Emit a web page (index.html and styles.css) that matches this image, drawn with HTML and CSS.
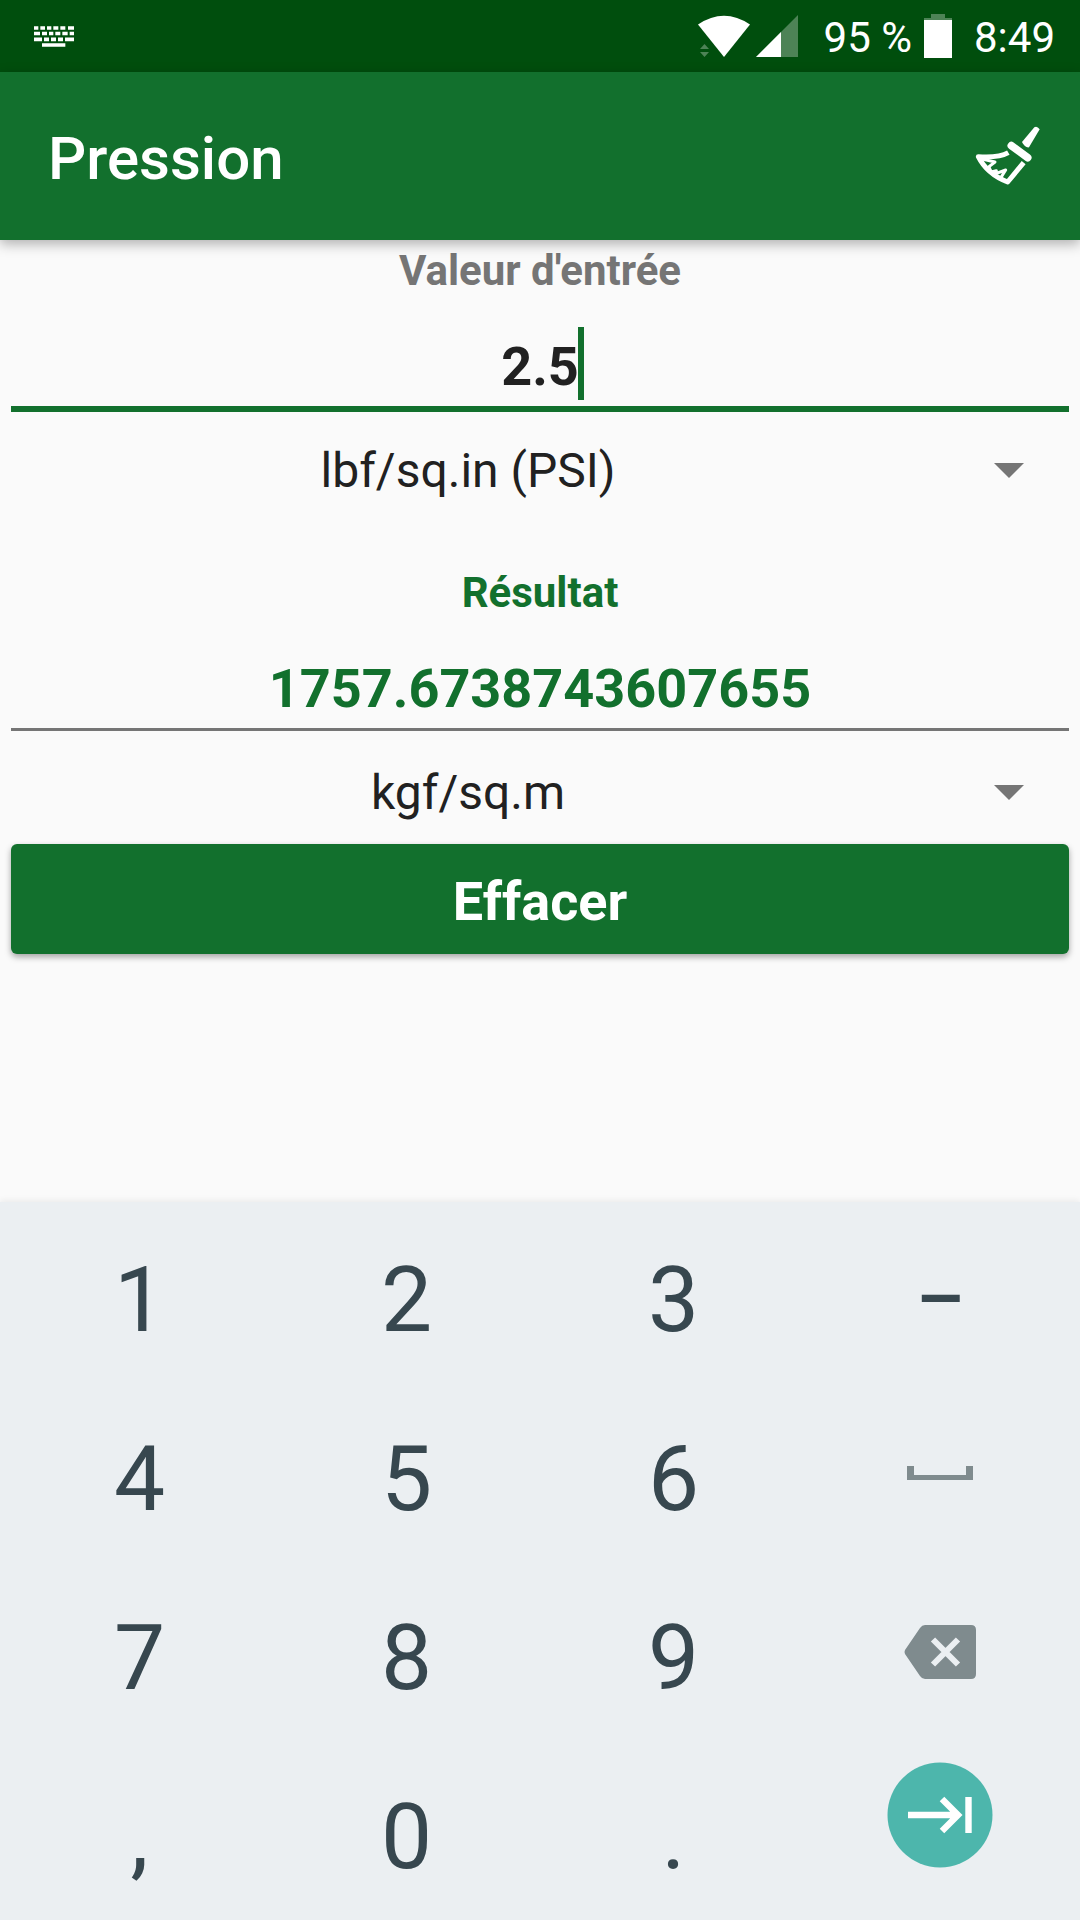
FILE: index.html
```html
<!DOCTYPE html>
<html lang="fr">
<head>
  <meta charset="utf-8">
  <meta name="viewport" content="width=device-width, initial-scale=1">
  <title>Pression</title>
  <link rel="stylesheet" href="styles.css">
</head>
<body>
  <div class="status-bar">
    <svg class="status-keyboard" viewBox="0 0 120 62" width="40" height="21" fill="#fff" aria-hidden="true">
      <path d="M0 0h13v11H0zM19 0h14v11H19zM39 0h13v11H39zM58 0h15v11H58zM79 0h15v11H79zM102 0h18v11h-18z"/>
      <path d="M0 17h18v10H0zM24 17h15v10H24zM45 17h13v10H45zM64 17h15v10H64zM85 17h16v10H85zM107 17h13v10h-13z"/>
      <path d="M0 34h24v11H0zM30 34h15v11H30zM51 34h15v11H51zM72 34h15v11H72zM93 34h27v11H93zM24 51h70v11H24z"/>
    </svg>
    <svg class="status-wifi" viewBox="0 0 52 44" width="52" height="44" aria-hidden="true">
      <path d="M0 10.500Q26-7 52 10.500L26 43z" fill="#fff"/>
      <path d="M2 35l4.500-5 4.500 5zM2 38h9l-4.500 5z" fill="#4d8356"/>
    </svg>
    <svg class="status-signal" viewBox="0 0 42 44" width="42" height="44" aria-hidden="true">
      <path d="M0 43L42 1v42z" fill="#4d8356"/>
      <path d="M0 43l25-25v25z" fill="#fff"/>
    </svg>
    <span class="status-percent">95 %</span>
    <svg class="status-battery" viewBox="0 0 28 44" width="28" height="44" aria-hidden="true">
      <path d="M7 0h14v4h7v2H0V4h7z" fill="#4d8356"/>
      <path d="M0 6h28v38H0z" fill="#fff"/>
    </svg>
    <time class="status-time">8:49</time>
  </div>

  <header class="app-bar">
    <h1 class="app-title">Pression</h1>
    <button class="clean-button" type="button" aria-label="Nettoyer">
      <svg viewBox="0 0 195 180" width="65" height="60" fill="none" stroke="#fff" aria-hidden="true">
        <path d="M141 48L178 4Q186-1 194 10L162 64Q150 66 141 48z" fill="#fff" stroke="none"/>
        <path d="M109 59L158 95" stroke-width="23" stroke-linecap="round"/>
        <path d="M100 80Q72 96 10 92Q36 144 98 168L146 110" stroke-width="15" stroke-linejoin="round"/>
        <path d="M18 98L60 108L42 122L48 138L64 134M56 145L92 132L78 154" stroke-width="9" stroke-linejoin="round" stroke-linecap="round"/>
      </svg>
    </button>
  </header>

  <main class="converter">
    <section class="group">
      <label class="label" for="entry">Valeur d'entrée</label>
      <div class="entry">
        <input class="value" id="entry" type="text" inputmode="decimal" value="2.5">
        <span class="caret"></span>
      </div>
      <div class="unit">
        <select class="unit-select" aria-label="Unité d'entrée">
          <option>lbf/sq.in (PSI)</option>
          <option>kgf/sq.m</option>
        </select>
        <span class="unit-arrow"></span>
      </div>
    </section>

    <section class="group">
      <label class="label label-result" for="result">Résultat</label>
      <input class="value value-result" id="result" type="text" value="1757.6738743607655" readonly>
      <div class="unit">
        <select class="unit-select" aria-label="Unité du résultat">
          <option>kgf/sq.m</option>
          <option>lbf/sq.in (PSI)</option>
        </select>
        <span class="unit-arrow"></span>
      </div>
    </section>

    <button class="clear-button" type="button">Effacer</button>
  </main>

  <div class="keyboard">
    <button class="key" type="button">1</button>
    <button class="key" type="button">2</button>
    <button class="key" type="button">3</button>
    <button class="key key-dash" type="button">–</button>
    <button class="key" type="button">4</button>
    <button class="key" type="button">5</button>
    <button class="key" type="button">6</button>
    <button class="key key-icon" type="button" aria-label="Espace">
      <svg viewBox="0 0 66 14" width="66" height="14" fill="#7f8b8e" aria-hidden="true"><path d="M0 0h7v9h52V0h7v14H0z"/></svg>
    </button>
    <button class="key" type="button">7</button>
    <button class="key" type="button">8</button>
    <button class="key" type="button">9</button>
    <button class="key key-icon" type="button" aria-label="Supprimer">
      <svg viewBox="0 0 72 54" width="72" height="54" aria-hidden="true">
        <path d="M21 0H67Q72 0 72 5V49Q72 54 67 54H21Q18 54 16 51L1 29Q0 27 1 25L16 3Q18 0 21 0z" fill="#7f8b8e"/>
        <path d="M29 14.500L54 39.500M54 14.500L29 39.500" stroke="#ebeff2" stroke-width="6"/>
      </svg>
    </button>
    <button class="key" type="button">,</button>
    <button class="key" type="button">0</button>
    <button class="key" type="button">.</button>
    <button class="key key-enter" type="button" aria-label="Suivant">
      <svg viewBox="0 0 106 106" width="106" height="106" aria-hidden="true">
        <circle cx="53" cy="53" r="52.500" fill="#4db6ac"/>
        <path d="M21 53H70M55 37L71 53L55 69M81.500 35V71" fill="none" stroke="#fff" stroke-width="6.400"/>
      </svg>
    </button>
  </div>
</body>
</html>
```
FILE: styles.css
```css
* {
  box-sizing: border-box;
}

body {
  margin: 0;
  min-height: 100vh;
  display: flex;
  flex-direction: column;
  background: #fafafa;
  color: #212121;
  font-family: Roboto, "Noto Sans", sans-serif;
}

button,
input,
select {
  margin: 0;
  padding: 0;
  border: 0;
  border-radius: 0;
  background: none;
  color: inherit;
  font: inherit;
  outline: none;
}

svg {
  display: block;
}

/* Status bar */
.status-bar {
  display: flex;
  align-items: center;
  height: 72px;
  padding: 0 25px 0 34px;
  background: #004e0d;
  color: #fff;
  font-size: 42px;
  line-height: 48px;
}

.status-wifi {
  margin-left: auto;
}

.status-signal {
  margin: 0 26px 0 6px;
}

.status-percent,
.status-time {
  padding-top: 4px;
}

.status-battery {
  margin: 0 22px 0 12px;
}

/* App bar */
.app-bar {
  position: relative;
  display: flex;
  align-items: center;
  justify-content: space-between;
  height: 168px;
  padding: 0 40px 0 48px;
  background: #12702d;
  color: #fff;
  box-shadow: 0 4px 12px rgba(0, 0, 0, 0.3);
}

.app-title {
  margin: 0;
  padding-top: 6px;
  font-size: 60px;
  font-weight: 500;
  line-height: 72px;
}

/* Converter form */
.converter {
  flex: 1;
  padding: 0 11px;
}

.group {
  display: flex;
  flex-direction: column;
}

.group + .group {
  margin-top: 40px;
}

.label {
  height: 60px;
  color: #757575;
  font-size: 42px;
  font-weight: 700;
  line-height: 62px;
  text-align: center;
}

.label-result {
  color: #12702d;
}

.entry {
  position: relative;
}

.value {
  display: block;
  width: 100%;
  height: 112px;
  padding-top: 26px;
  border-bottom: 6px solid #12702d;
  font-size: 54px;
  font-weight: 700;
  text-align: center;
}

.value-result {
  height: 109px;
  margin-bottom: 3px;
  border-bottom: 3px solid #757575;
  color: #12702d;
}

.caret {
  position: absolute;
  bottom: 12px;
  left: calc(50% + 38px);
  width: 6px;
  height: 73px;
  background: #12702d;
}

.unit {
  position: relative;
  height: 110px;
}

.unit-select {
  width: 100%;
  height: 100%;
  padding: 6px 144px 0 0;
  appearance: none;
  font-size: 48px;
  text-align: center;
  text-align-last: center;
}

.unit-arrow {
  position: absolute;
  top: 51px;
  right: 45px;
  width: 30px;
  height: 15px;
  background: #757575;
  clip-path: polygon(0 0, 100% 0, 50% 100%);
  pointer-events: none;
}

.clear-button {
  display: block;
  width: 100%;
  height: 110px;
  padding-top: 4px;
  border-radius: 6px;
  background: #12702d;
  box-shadow: 0 3px 6px rgba(0, 0, 0, 0.35);
  color: #fff;
  font-size: 54px;
  font-weight: 700;
}

/* Numeric keyboard */
.keyboard {
  display: grid;
  grid-template-columns: repeat(4, 1fr);
  grid-auto-rows: 179px;
  padding: 0 6px 2px;
  background: #ebeff2;
  box-shadow: 0 -2px 6px rgba(0, 0, 0, 0.06);
}

.key {
  display: flex;
  align-items: center;
  justify-content: center;
  padding-top: 16px;
  color: #37474f;
  font-size: 91px;
  line-height: 108px;
}

.key-dash {
  padding-top: 14px;
  font-size: 76px;
  font-weight: 500;
}

.key-icon {
  padding: 4px 2px 0 0;
}

.key-enter {
  padding: 0 2px 27px 0;
}
```
